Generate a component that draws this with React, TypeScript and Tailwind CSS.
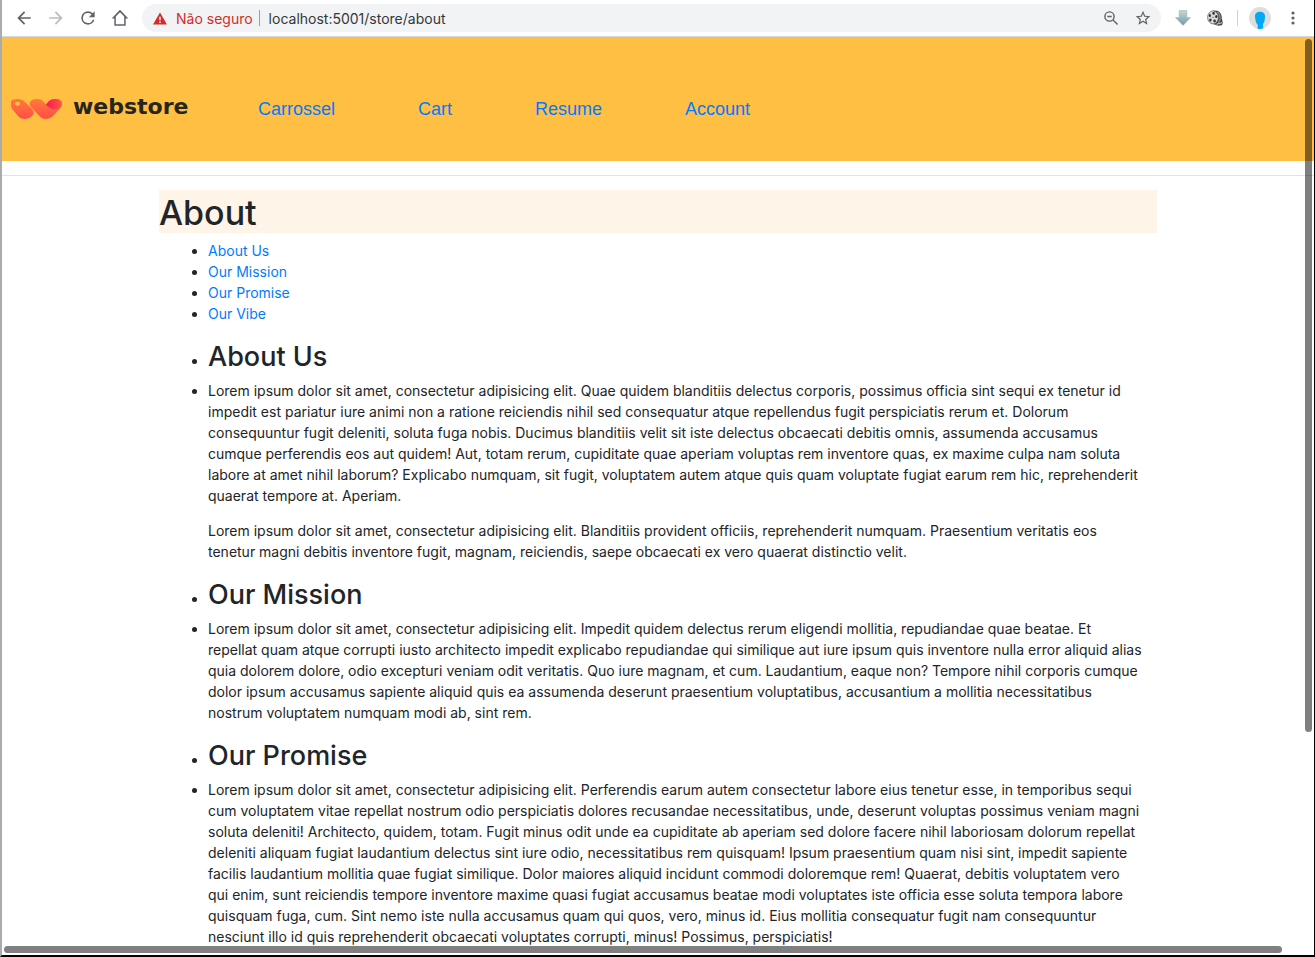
import React from 'react';

const menu = ['About Us', 'Our Mission', 'Our Promise', 'Our Vibe'];

const sections: { title: string; paragraphs: string[][] }[] = [
  {
    title: 'About Us',
    paragraphs: [
      [
        'Lorem ipsum dolor sit amet, consectetur adipisicing elit. Quae quidem blanditiis delectus corporis, possimus officia sint sequi ex tenetur id',
        'impedit est pariatur iure animi non a ratione reiciendis nihil sed consequatur atque repellendus fugit perspiciatis rerum et. Dolorum',
        'consequuntur fugit deleniti, soluta fuga nobis. Ducimus blanditiis velit sit iste delectus obcaecati debitis omnis, assumenda accusamus',
        'cumque perferendis eos aut quidem! Aut, totam rerum, cupiditate quae aperiam voluptas rem inventore quas, ex maxime culpa nam soluta',
        'labore at amet nihil laborum? Explicabo numquam, sit fugit, voluptatem autem atque quis quam voluptate fugiat earum rem hic, reprehenderit',
        'quaerat tempore at. Aperiam.',
      ],
      [
        'Lorem ipsum dolor sit amet, consectetur adipisicing elit. Blanditiis provident officiis, reprehenderit numquam. Praesentium veritatis eos',
        'tenetur magni debitis inventore fugit, magnam, reiciendis, saepe obcaecati ex vero quaerat distinctio velit.',
      ],
    ],
  },
  {
    title: 'Our Mission',
    paragraphs: [
      [
        'Lorem ipsum dolor sit amet, consectetur adipisicing elit. Impedit quidem delectus rerum eligendi mollitia, repudiandae quae beatae. Et',
        'repellat quam atque corrupti iusto architecto impedit explicabo repudiandae qui similique aut iure ipsum quis inventore nulla error aliquid alias',
        'quia dolorem dolore, odio excepturi veniam odit veritatis. Quo iure magnam, et cum. Laudantium, eaque non? Tempore nihil corporis cumque',
        'dolor ipsum accusamus sapiente aliquid quis ea assumenda deserunt praesentium voluptatibus, accusantium a mollitia necessitatibus',
        'nostrum voluptatem numquam modi ab, sint rem.',
      ],
    ],
  },
  {
    title: 'Our Promise',
    paragraphs: [
      [
        'Lorem ipsum dolor sit amet, consectetur adipisicing elit. Perferendis earum autem consectetur labore eius tenetur esse, in temporibus sequi',
        'cum voluptatem vitae repellat nostrum odio perspiciatis dolores recusandae necessitatibus, unde, deserunt voluptas possimus veniam magni',
        'soluta deleniti! Architecto, quidem, totam. Fugit minus odit unde ea cupiditate ab aperiam sed dolore facere nihil laboriosam dolorum repellat',
        'deleniti aliquam fugiat laudantium delectus sint iure odio, necessitatibus rem quisquam! Ipsum praesentium quam nisi sint, impedit sapiente',
        'facilis laudantium mollitia quae fugiat similique. Dolor maiores aliquid incidunt commodi doloremque rem! Quaerat, debitis voluptatem vero',
        'qui enim, sunt reiciendis tempore inventore maxime quasi fugiat accusamus beatae modi voluptates iste officia esse soluta tempora labore',
        'quisquam fuga, cum. Sint nemo iste nulla accusamus quam qui quos, vero, minus id. Eius mollitia consequatur fugit nam consequuntur',
        'nesciunt illo id quis reprehenderit obcaecati voluptates corrupti, minus! Possimus, perspiciatis!',
      ],
    ],
  },
];

const anchor = (title: string) => '#' + title.toLowerCase().replace(' ', '-');

function NavButton({ label, d, className }: { label: string; d: string; className: string }) {
  return (
    <button aria-label={label} className={className}>
      <svg viewBox="0 0 24 24" className="size-5" fill="currentColor">
        <path d={d} />
      </svg>
    </button>
  );
}

function Toolbar() {
  return (
    <div className="flex h-[37px] shrink-0 items-center border-b border-[#d4d6d9] bg-white pr-[13px] pl-3">
      <div className="flex gap-3">
        <NavButton label="Back" className="text-[#5f6368]" d="M20 11H7.83l5.59-5.59L12 4l-8 8 8 8 1.41-1.41L7.83 13H20v-2z" />
        <NavButton label="Forward" className="text-[#babcbe]" d="M12 4l-1.41 1.41L16.17 11H4v2h12.17l-5.58 5.59L12 20l8-8z" />
        <NavButton
          label="Reload"
          className="text-[#5f6368]"
          d="M17.65 6.35A7.96 7.96 0 0 0 12 4a8 8 0 1 0 7.73 10h-2.08A6 6 0 1 1 12 6c1.66 0 3.14.69 4.22 1.78L13 11h7V4l-2.35 2.35z"
        />
        <NavButton
          label="Home"
          className="text-[#5f6368]"
          d="M12 2.2L2 12.6h3.2V21.4h13.6V12.6H22L12 2.2zm0 2.9l5 5.2v9.1H7v-9.1l5-5.2z"
        />
      </div>
      <div className="ml-3 flex h-7 min-w-0 flex-1 items-center rounded-full bg-[#f1f3f4] px-2.5 text-[14px]">
        <svg viewBox="0 0 16 14" className="h-[13px] w-4" aria-hidden="true">
          <path d="M8 0.5L15.5 13.5H0.5z" fill="#d22d2a" />
          <path d="M7.2 5h1.6v4H7.2zM7.2 10.2h1.6v1.6H7.2z" fill="#fff" />
        </svg>
        <span className="ml-2 text-[#d22d2a]">Não seguro</span>
        <span className="mr-[9px] ml-1.5 h-4 w-px bg-[#9a9da1]" />
        <input
          aria-label="Address"
          defaultValue="localhost:5001/store/about"
          className="min-w-0 flex-1 bg-transparent text-[#34373b] outline-none"
        />
        <button aria-label="Zoom" className="text-[#5f6368]">
          <svg viewBox="0 0 16 16" className="size-4" fill="none" stroke="currentColor" strokeWidth="1.4">
            <circle cx="6.5" cy="6.5" r="4.6" />
            <path d="M10 10l4.6 4.6M4.3 6.5h4.4" />
          </svg>
        </button>
        <button aria-label="Bookmark" className="ml-4 text-[#5f6368]">
          <svg viewBox="0 0 24 24" className="size-4" fill="currentColor">
            <path d="M23 9.24l-7.900-.68L12 1.300 8.900 8.560 1 9.240l6 5.200L5.200 22.100 12 18l6.800 4.100L17 14.440 23 9.240zM12 15.900l-4.100 2.500 1.100-4.700-3.600-3.150 4.770-.41L12 5.700l1.830 4.440 4.770.41L15 13.700l1.100 4.700L12 15.900z" />
          </svg>
        </button>
      </div>
      <div className="ml-3.5 flex items-center">
        <button aria-label="Download">
          <svg viewBox="0 0 16 16" className="size-4">
            <defs>
              <linearGradient id="arrow" x1="0" y1="0" x2="0" y2="1">
                <stop offset="0" stopColor="#c9d6d8" />
                <stop offset="1" stopColor="#6f9aa6" />
              </linearGradient>
            </defs>
            <path d="M4.2.6h7.6v7h3.7L8 15.4.5 7.6h3.7z" fill="url(#arrow)" stroke="#9db1b5" strokeWidth=".6" />
          </svg>
        </button>
        <button aria-label="Video" className="ml-4">
          <svg viewBox="0 0 16 16" className="size-4">
            <path d="M6.500 .5L10.500 .8Q15 3 14.800 8.500L15.800 12.500 15 15.200 11 15.700 6 14z" fill="#4a4a4a" />
            <path d="M10.500 2Q13.500 5 13 9.500L11.500 13" fill="none" stroke="#8d8d8d" strokeWidth="1.200" />
            <ellipse cx="6" cy="7.400" rx="5.400" ry="6.500" fill="#dcdcdc" stroke="#5a5a5a" strokeWidth=".7" />
            <g fill="#303030">
              <ellipse cx="6.600" cy="3.400" rx="1.300" ry="1.400" />
              <ellipse cx="2.900" cy="5.600" rx="1.100" ry="1.500" />
              <ellipse cx="9.300" cy="6.500" rx="1.200" ry="1.500" />
              <ellipse cx="3.400" cy="10" rx="1.200" ry="1.500" />
              <ellipse cx="7.600" cy="11" rx="1.300" ry="1.400" />
              <circle cx="6" cy="7.300" r=".6" />
            </g>
            <path d="M9.500 14.300l5.500-1.600" stroke="#d0d0d0" strokeWidth="1" />
          </svg>
        </button>
        <span className="ml-3.5 h-4 w-px bg-[#cfd1d3]" />
        <button aria-label="Profile" className="ml-[11px]">
          <svg viewBox="0 0 22 22" className="size-[22px]">
            <circle cx="11" cy="11" r="11" fill="#dedede" />
            <path d="M6 9.500C5.500 3.500 16.500 3 16 9.500C16 13.500 15.200 15.500 14 17L14.200 21.500Q11 22.300 8.600 21.700L8.800 18C7 16.500 6.200 13 6 9.500z" fill="#03a9f4" />
          </svg>
        </button>
        <button aria-label="Menu" className="ml-3.5 text-[#5f6368]">
          <svg viewBox="0 0 16 16" className="size-4" fill="currentColor">
            <circle cx="8" cy="3" r="1.6" />
            <circle cx="8" cy="8" r="1.6" />
            <circle cx="8" cy="13" r="1.6" />
          </svg>
        </button>
      </div>
    </div>
  );
}

function Logo() {
  return (
    <a href="/store" className="flex w-[248px] shrink-0 items-center gap-2.5">
      <svg viewBox="0 0 53 24" className="h-6 w-[53px]" aria-hidden="true">
        <defs>
          <linearGradient id="warm" x1="0" y1="0" x2="0" y2="1">
            <stop offset="0" stopColor="#ff7a3a" />
            <stop offset="1" stopColor="#ff4d47" />
          </linearGradient>
          <linearGradient id="pink" x1="0" y1="0" x2="1" y2="0">
            <stop offset="0" stopColor="#ff1459" />
            <stop offset="1" stopColor="#ff5a44" />
          </linearGradient>
        </defs>
        <path fillRule="evenodd" d="M1 4Q3 2 7 2Q12 2 14 4L22 12Q25 16 22 19Q19 22 15 22Q11 22 9 20L3 13Q1 11 1 8zM7.500 4.800a2.600 2 0 1 0 .1 0z" fill="url(#warm)" />
        <path d="M19.500 7Q20 2 27 2Q31 2 33 4L36 7.500L39 4Q41 2 45 2Q52 2 52 7Q52 9 50 11.500L43 19Q40 22 36 22Q32 22 29.500 19L21 10Q19.500 8.500 19.500 7z" fill="url(#warm)" />
        <path d="M36 7.500L39 4Q41 2 45 2Q52 2 52 7Q52 9 49 12H42Q39 11 36 7.500z" fill="url(#pink)" />
      </svg>
      <span className="pb-1 font-['DejaVu_Sans',sans-serif] text-[22px] leading-7 font-bold text-[#25261f]">webstore</span>
    </a>
  );
}

export default function App() {
  return (
    <div className="h-screen overflow-hidden border-r border-b-2 border-l-2 border-r-black border-b-black border-l-[#aaabad] bg-white font-['Inter',sans-serif] text-[14px] leading-[21px] text-[#212529]">
      <div className="relative flex h-full flex-col">
        <Toolbar />
        <div className="min-h-0 flex-1 overflow-hidden">
          <header className="flex h-[124px] items-center bg-[#ffbf43] pt-5 pl-2">
            <Logo />
            <nav className="flex gap-[83px] font-['Liberation_Sans',sans-serif] text-[18px] text-[#007bff]">
              <a href="/store/carrossel">Carrossel</a>
              <a href="/store/cart">Cart</a>
              <a href="/store/resume">Resume</a>
              <a href="/store/account">Account</a>
            </nav>
          </header>
          <hr className="my-3.5 border-[#e3e3e3]" />
          <main className="mx-auto w-full max-w-[998px]">
            <h1 className="mb-[7px] bg-[#fff4e8] pt-0.5 text-[34px] leading-[41px] font-medium">About</h1>
            <ul className="mb-3.5 list-disc pl-[49px]">
              {menu.map((m) => (
                <li key={m}>
                  <a href={anchor(m)} className="text-[#007bff]">{m}</a>
                </li>
              ))}
            </ul>
            <ul className="list-disc pl-[49px]">
              {sections.map((s) => (
                <React.Fragment key={s.title}>
                  <li id={anchor(s.title).slice(1)}>
                    <h2 className="mb-1 text-[27px] leading-[38px] font-medium">{s.title}</h2>
                  </li>
                  <li>
                    {s.paragraphs.map((lines, i) => (
                      <p key={i} className="mb-3.5 whitespace-pre-line">{lines.join('\n')}</p>
                    ))}
                  </li>
                </React.Fragment>
              ))}
            </ul>
          </main>
        </div>
        <div className="absolute top-[39px] right-0.5 h-[693px] w-[7px] rounded-full bg-black/50" />
        <div className="absolute bottom-0.5 left-0.5 h-[7px] w-[1278px] rounded-full bg-[#808080]" />
      </div>
    </div>
  );
}
